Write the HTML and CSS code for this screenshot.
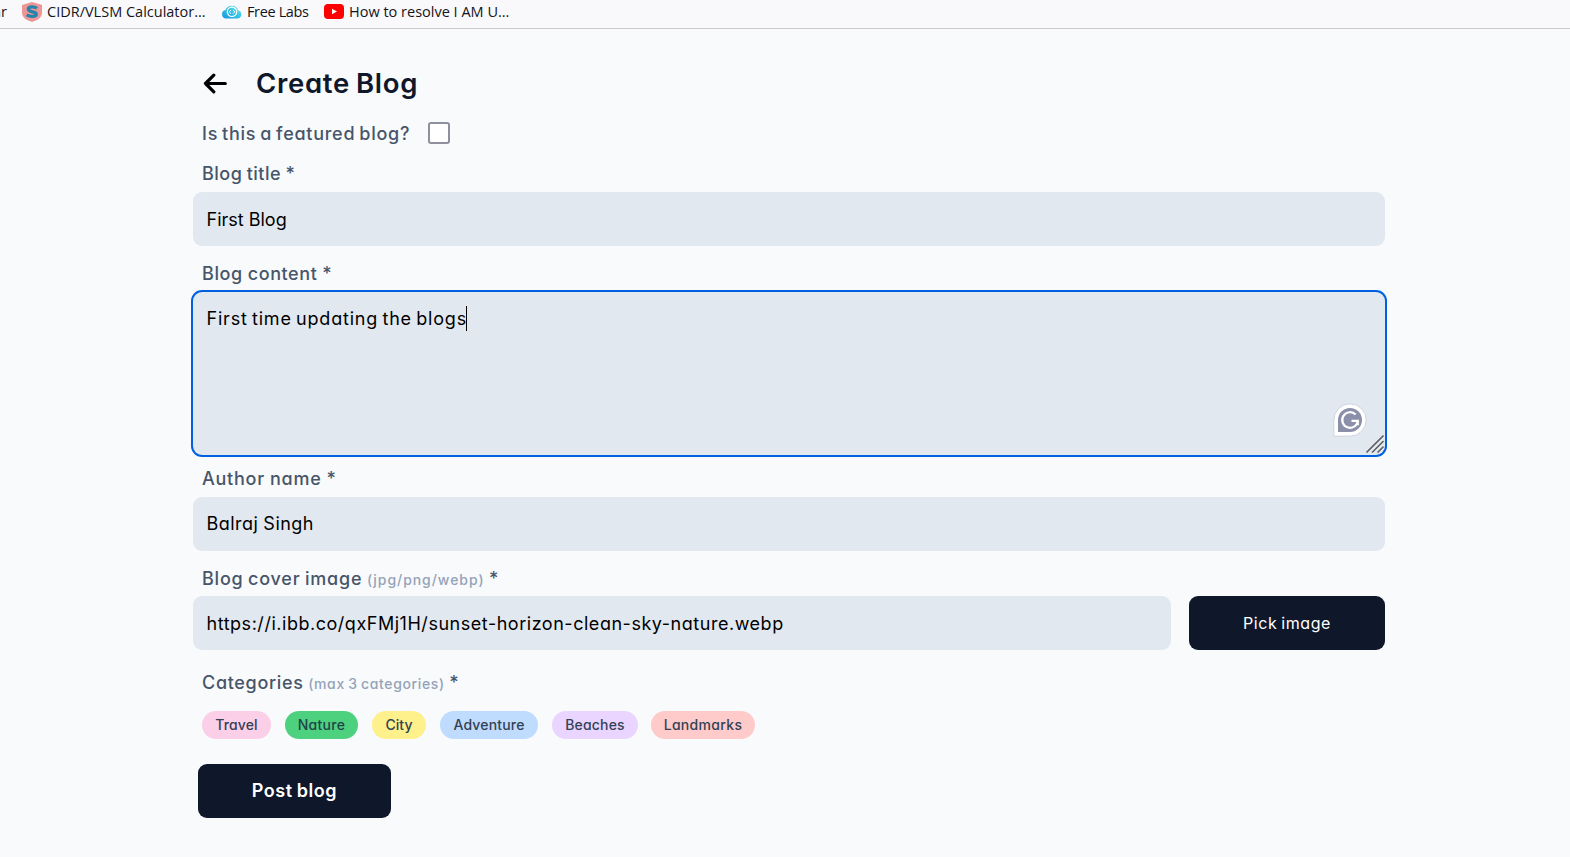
FILE: index.html
```
<!DOCTYPE html>
<html lang="en">
<head>
<meta charset="utf-8">
<title>Create Blog</title>
<link rel="stylesheet" href="styles.css">
</head>
<body>
<nav class="bookmarks">
  <span class="cut">ar</span>
  <svg class="ico-shield" width="20" height="20" viewBox="0 0 20 20"><path d="M10 0 18 2.200 20 3v8c0 4.500-5 7.500-10 9C5 18.500 0 15.500 0 11V3z" fill="#ec9795"/><path d="M15 6.300C13.500 5.200 11.800 4.900 10 4.900c-2.700 0-3.700.9-3.700 2.200 0 3.700 8 1.800 8 5 0 1.500-1.600 2.300-4 2.300-2 0-4-.5-5.600-1.500" fill="none" stroke="#2584ad" stroke-width="3.200"/></svg>
  <span class="bm bm-cidr">CIDR/VLSM Calculator...</span>
  <svg class="ico-cloud" width="20" height="14" viewBox="0 0 20 14"><defs><linearGradient id="cg" x1="0" y1="1" x2="1" y2="0"><stop offset="0" stop-color="#1593e0"/><stop offset=".55" stop-color="#36c7e3"/><stop offset="1" stop-color="#8de6ea"/></linearGradient></defs><path d="M4 13.500A4.300 4.300 0 0 1 3.500 5 6.800 6.800 0 0 1 16.300 5.500 4.100 4.100 0 0 1 16 13.500z" fill="url(#cg)"/><circle cx="10" cy="6.800" r="4.700" fill="none" stroke="#fff" stroke-width="1.200"/><path d="M9 5 7.200 6.800 9 8.600M11 5l1.800 1.800L11 8.600" fill="none" stroke="#fff"/></svg>
  <span class="bm bm-labs">Free Labs</span>
  <svg class="ico-yt" width="20" height="15" viewBox="0 0 20 15"><rect width="20" height="15" rx="4" fill="#f00"/><path d="M8 4.700v5.600l5-2.800z" fill="#fff"/></svg>
  <span class="bm bm-how">How to resolve I AM U...</span>
</nav>
<main class="page">
  <header class="head">
    <svg class="back" width="24" height="22" viewBox="0 0 24 22" fill="none" stroke="#000" stroke-width="3.200" stroke-linecap="round" stroke-linejoin="round"><path d="M22.300 10.500H2.500M10.800 2.200 2.500 10.500l8.300 8.300"/></svg>
    <h1 class="title">Create Blog</h1>
  </header>
  <div class="featured"><label class="label l-featured" for="featured">Is this a featured blog?</label><input class="check" id="featured" type="checkbox"></div>
  <label class="label l-title">Blog title *</label>
  <div class="field f-title">First Blog</div>
  <label class="label l-content">Blog content *</label>
  <div class="field area"><span class="f-content">First time updating the blogs</span><i class="caret"></i>
    <svg class="grammarly" width="34" height="34" viewBox="0 0 34 34"><path d="M.8 33.200V17A16.200 16.200 0 1 1 17 33.200z" fill="#fff" stroke="#cfd2df"/><path d="M5 29V17a12 12 0 1 1 12 12z" fill="#8b8fa9"/><path d="M22.600 11.500A7.800 7.800 0 1 0 24.800 17.900H18.500M24.800 17.900v4.300" fill="none" stroke="#fff" stroke-width="2.200"/></svg>
    <svg class="grip" width="18" height="18" viewBox="0 0 18 18"><path d="M.5 17.500 17.500.5M6 17.500 17.500 6M11.500 17.500l6-6" stroke="#fff" stroke-width="3" opacity=".6"/><path d="M.5 17.500 17.500.5M6 17.500 17.500 6M11.500 17.500l6-6" stroke="#606367" stroke-width="1.700"/></svg>
  </div>
  <label class="label l-author">Author name *</label>
  <div class="field f-author">Balraj Singh</div>
  <label class="label l-cover">Blog cover image <small class="hint h-cover">(jpg/png/webp)</small> *</label>
  <div class="row">
    <div class="field f-url">https://i.ibb.co/qxFMj1H/sunset-horizon-clean-sky-nature.webp</div>
    <button class="btn pick">Pick image</button>
  </div>
  <label class="label l-cats">Categories <small class="hint h-cats">(max 3 categories)</small> *</label>
  <div class="tags">
    <span class="tag travel">Travel</span>
    <span class="tag nature">Nature</span>
    <span class="tag city">City</span>
    <span class="tag adventure">Adventure</span>
    <span class="tag beaches">Beaches</span>
    <span class="tag landmarks">Landmarks</span>
  </div>
  <button class="btn post">Post blog</button>
</main>
</body>
</html>
```
FILE: styles.css
```
* { box-sizing: border-box; }
body { margin: 0; height: 857px; overflow: hidden; background: #f8fafc; font-family: Inter, sans-serif; font-feature-settings: "cv11"; color: #000; }

.bookmarks { height: 29px; padding-bottom: 5px; display: flex; align-items: center; background: #f9f9fb; border-bottom: 1px solid #c9c9ce; font: 14.5px/20px "Open Sans", sans-serif; color: #15141a; white-space: nowrap; overflow: hidden; }
.cut { width: 7px; direction: rtl; margin-right: 15px; }
.ico-shield { margin-right: 5px; flex: none; }
.bm-cidr { width: 175px; }
.ico-cloud { margin-right: 5px; flex: none; }
.bm-labs { width: 77px; letter-spacing: -.36px; }
.ico-yt { margin-right: 5px; flex: none; }

.page { width: 1192px; margin-left: 193px; padding-top: 31px; display: flex; flex-direction: column; }
.head { height: 48px; padding-left: 10px; display: flex; align-items: center; }
.title { margin: 0 0 2px 29px; font-size: 27.5px; line-height: 36px; font-weight: 600; letter-spacing: .7px; word-spacing: -1.5px; color: #0f172a; }
.featured { height: 27px; margin: 12px 0 13px; display: flex; align-items: center; }
.check { appearance: none; width: 22px; height: 22px; margin: 0 0 2px 18px; border: 2px solid #8f8f9d; border-radius: 3px; background: #fff; }
.label { display: block; padding-left: 9px; font-size: 18px; line-height: 27px; font-weight: 500; color: #475569; white-space: nowrap; }
.hint { font-size: 14px; line-height: 1; color: #94a3b8; }
.l-featured { letter-spacing: .73px; word-spacing: -1.5px; width: 217px; }
.l-title { letter-spacing: .5px; word-spacing: -1px; }
.l-content { letter-spacing: .6px; word-spacing: -.5px; margin-top: 14px; }
.l-author { letter-spacing: .75px; word-spacing: -.5px; margin-top: 10px; }
.l-cover { letter-spacing: .78px; word-spacing: -1px; margin-top: 14px; }
.l-cats { letter-spacing: .68px; word-spacing: -1px; margin-top: 19px; }
.h-cover { letter-spacing: .95px; }
.h-cats { letter-spacing: .64px; }

.field { height: 54px; margin-top: 5px; padding: 0 13.500px; border-radius: 9px; background: #e2e8f0; font-size: 18px; line-height: 54px; white-space: nowrap; }
.f-title { line-height: 56px; }
.area { position: relative; height: 163px; padding-top: 13px; line-height: 27px; display: flex; align-items: flex-start; box-shadow: 0 0 0 2px #0061e0; }
.f-content { letter-spacing: .8px; word-spacing: -1.5px; }
.caret { width: 1px; height: 25px; margin: 1px 0 0 -.5px; background: #000; }
.grammarly { position: absolute; right: 18px; bottom: 18px; }
.grip { position: absolute; right: 1px; bottom: 2px; }
.f-author { letter-spacing: .47px; word-spacing: -.5px; }
.row { display: flex; gap: 18px; margin-top: 4px; }
.f-url { flex: 1; margin: 0; line-height: 56px; letter-spacing: .53px; }
.btn { height: 54px; padding: 0; border: 0; border-radius: 9px; background: #0f172a; color: #fff; font-family: inherit; font-feature-settings: inherit; }
.pick { width: 196px; font-size: 16px; letter-spacing: .55px; word-spacing: -1px; }
.post { width: 193px; margin: 25px 0 0 5px; padding-bottom: 2px; font-size: 18px; font-weight: 600; letter-spacing: .55px; word-spacing: -1px; }

.tags { display: flex; margin: 15px 0 0 9px; }
.tag { height: 28px; border-radius: 14px; text-align: center; font-size: 14px; line-height: 27px; font-weight: 500; color: #334155; margin-right: 14px; }
.travel { width: 69px; background: #fbcfe8; letter-spacing: .1px; }
.nature { width: 73px; background: #4ed17f; color: #1e4548; letter-spacing: .28px; }
.city { width: 54px; background: #fef08a; }
.adventure { width: 98px; background: #bfdbfe; letter-spacing: .18px; }
.beaches { width: 86px; background: #e9d5ff; letter-spacing: .2px; margin-right: 13px; }
.landmarks { width: 104px; background: #fecaca; letter-spacing: .33px; }
```
